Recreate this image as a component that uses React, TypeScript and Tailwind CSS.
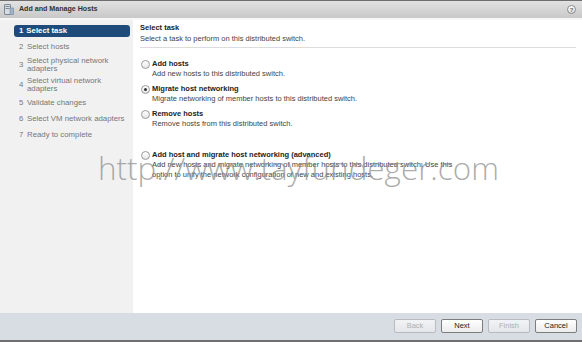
import React from "react";

const menu: { n: string; lines: string[] }[] = [
  { n: "2", lines: ["Select hosts"] },
  { n: "3", lines: ["Select physical network", "adapters"] },
  { n: "4", lines: ["Select virtual network", "adapters"] },
  { n: "5", lines: ["Validate changes"] },
  { n: "6", lines: ["Select VM network adapters"] },
  { n: "7", lines: ["Ready to complete"] },
];

function Radio({ checked }: { checked?: boolean }) {
  return (
    <span className="w-[9px] h-[9px] rounded-full border border-[#9a9a9a] bg-gradient-to-b from-white to-[#e6e6e6] flex items-center justify-center shrink-0">
      {checked && <span className="w-[3px] h-[3px] rounded-full bg-[#333]" />}
    </span>
  );
}

function Option({
  label,
  desc,
  checked,
  className,
}: {
  label: string;
  desc: string[];
  checked?: boolean;
  className?: string;
}) {
  return (
    <div className={className}>
      <div className="flex items-center gap-[2px] h-[10px]">
        <Radio checked={checked} />
        <span className="font-bold text-[#222] text-[7.5px] leading-[10px] whitespace-nowrap">{label}</span>
      </div>
      {desc.map((d, i) => (
        <div key={i} className="pl-[11px] text-[#444] text-[7.5px] leading-[10px] whitespace-nowrap">
          {d}
        </div>
      ))}
    </div>
  );
}

function Btn({ label, disabled }: { label: string; disabled?: boolean }) {
  return (
    <div
      className={
        "w-[42px] h-[14px] rounded-[2px] border flex items-center justify-center text-[7.5px] bg-gradient-to-b " +
        (disabled
          ? "border-[#b8bcc2] text-[#b0b0b0] from-[#f2f3f5] to-[#e4e6ea]"
          : "border-[#7d7d7d] text-[#222] from-white to-[#ececec]")
      }
    >
      {label}
    </div>
  );
}

export default function App() {
  return (
    <div className="w-[582px] h-[342px] flex flex-col bg-white overflow-hidden relative font-['Liberation_Sans',Arial,sans-serif]">
      {/* Title bar */}
      <div className="h-[18px] shrink-0 border-t border-[#6e6e6e] bg-gradient-to-b from-[#e2e2e2] to-[#c8c8c8] flex items-center pl-[4px] pr-[4px]">
        <svg width="10" height="11" viewBox="0 0 10 11" className="shrink-0">
          <rect x="0.5" y="0.5" width="6" height="10" rx="0.5" fill="#d8dde4" stroke="#7b8796" />
          <rect x="1.5" y="2" width="4" height="1" fill="#7b8796" />
          <rect x="1.5" y="4" width="4" height="1" fill="#7b8796" />
          <rect x="6" y="4" width="3.5" height="6.5" fill="#9fb4c9" stroke="#6e8298" strokeWidth="0.6" />
        </svg>
        <span className="ml-[5px] font-bold text-[7.1px] text-[#333] whitespace-nowrap">Add and Manage Hosts</span>
        <div className="flex-1" />
        <span className="w-[9px] h-[9px] rounded-full border border-[#8a8a8a] bg-gradient-to-b from-white to-[#dcdcdc] flex items-center justify-center text-[6px] font-bold text-[#666] leading-none mr-[2px]">
          ?
        </span>
      </div>
      <div className="h-[2px] shrink-0 bg-[#f7f7f7]" />

      {/* Body */}
      <div className="flex-1 flex min-h-0">
        <div className="w-[133px] shrink-0 bg-[#f1f1f1] pt-[5px]">
          <div className="ml-[14px] w-[116px] h-[12px] rounded-[3px] bg-[#1f4b7b] flex items-center pl-[5px] gap-[3px] mb-[2px]">
            <span className="text-white font-bold text-[7.8px] leading-none">1</span>
            <span className="text-white font-bold text-[7.8px] leading-none whitespace-nowrap">Select task</span>
          </div>
          {menu.map((m) => (
            <div
              key={m.n}
              className={
                "flex items-center pl-[19px] text-[#777] text-[7.8px] leading-[8px] " +
                (m.lines.length > 1 ? "py-[2px]" : "py-[4px]")
              }
            >
              <span className="w-[8px] shrink-0">{m.n}</span>
              <div>
                {m.lines.map((l) => (
                  <div key={l} className="whitespace-nowrap">
                    {l}
                  </div>
                ))}
              </div>
            </div>
          ))}
        </div>

        <div className="flex-1 pt-[3px] pl-[7px] pr-[6px]">
          <div className="font-bold text-[#222] text-[7.5px] leading-[10px]">Select task</div>
          <div className="mt-[1px] text-[#444] text-[7.5px] leading-[10px]">Select a task to perform on this distributed switch.</div>
          <div className="mt-[3px] border-b border-[#dcdcdc]" />
          <div className="pl-[1px]">
            <Option className="mt-[11px]" label="Add hosts" desc={["Add new hosts to this distributed switch."]} />
            <Option
              className="mt-[5px]"
              checked
              label="Migrate host networking"
              desc={["Migrate networking of member hosts to this distributed switch."]}
            />
            <Option className="mt-[5px]" label="Remove hosts" desc={["Remove hosts from this distributed switch."]} />
            <Option
              className="mt-[21px]"
              label="Add host and migrate host networking (advanced)"
              desc={[
                "Add new hosts and migrate networking of member hosts to this distributed switch. Use this",
                "option to unify the network configuration of new and existing hosts.",
              ]}
            />
          </div>
        </div>
      </div>

      {/* Footer */}
      <div className="h-[29px] shrink-0 bg-[#d8dce3] border-b-[2px] border-[#6f6f6f] flex items-start justify-end gap-[5px] pr-[5px] pt-[6px]">
        <Btn label="Back" disabled />
        <Btn label="Next" />
        <Btn label="Finish" disabled />
        <Btn label="Cancel" />
      </div>

      {/* Watermark */}
      <div className="absolute left-[98px] top-[148px] text-[31.4px] leading-[40px] text-[#8f8f8f]/75 whitespace-nowrap pointer-events-none font-['Open_Sans',sans-serif] font-light">
        http://www.tayfundeger.com
      </div>
    </div>
  );
}
